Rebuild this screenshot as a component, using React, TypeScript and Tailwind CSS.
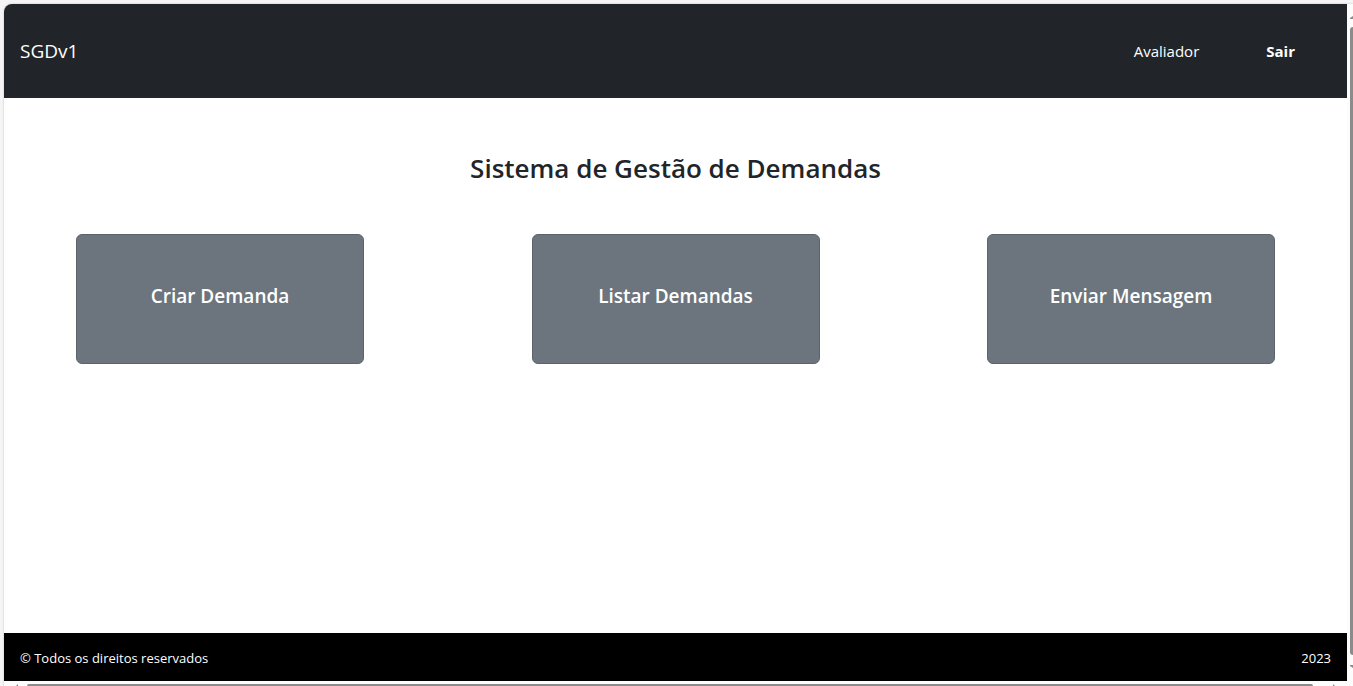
const actions = ["Criar Demanda", "Listar Demandas", "Enviar Mensagem"];

function Header() {
  return (
    <header className="flex h-[94px] shrink-0 items-center justify-between bg-[#212529] pr-[52px] pl-4 text-white">
      <a href="#inicio" className="text-[19px] leading-7">SGDv1</a>
      <nav className="flex items-center gap-[67px] text-[15px] leading-6">
        <a href="#perfil">Avaliador</a>
        <a href="#sair" className="font-bold">Sair</a>
      </nav>
    </header>
  );
}

function VerticalScrollbar() {
  return (
    <div aria-hidden="true" className="flex w-[6px] shrink-0 flex-col items-end overflow-hidden bg-[#fcfcfc] pt-3 pb-[13px]">
      <svg className="h-[3px] w-[3px] shrink-0" viewBox="0 0 3 3"><path d="M0 3V2L3 0V3Z" fill="#8b8b8b" /></svg>
      <div className="mt-2 mb-[10px] w-[3px] grow rounded-l-[3px] bg-[#8b8b8b]" />
      <svg className="h-[3px] w-[3px] shrink-0" viewBox="0 0 3 3"><path d="M0 0H3V3L0 1Z" fill="#8b8b8b" /></svg>
    </div>
  );
}

function HorizontalScrollbar() {
  return (
    <div aria-hidden="true" className="flex h-[5px] shrink-0 items-end overflow-hidden bg-[#fcfcfc] pr-[18px] pl-3">
      <svg className="h-[2px] w-[2px] shrink-0" viewBox="0 0 2 2"><path d="M2 0V2H0Z" fill="#8b8b8b" /></svg>
      <div className="mr-5 ml-[9px] h-[2px] grow rounded-t-[2px] bg-[#8b8b8b]" />
      <svg className="h-[2px] w-[2px] shrink-0" viewBox="0 0 2 2"><path d="M0 0V2H2Z" fill="#8b8b8b" /></svg>
    </div>
  );
}

export default function App() {
  return (
    <div className="h-screen overflow-hidden bg-[#f5f5f5] pt-1 pl-1 font-['Open_Sans','Noto_Sans',sans-serif]">
      <div className="flex h-full flex-col overflow-hidden rounded-tl-lg bg-white shadow-[0_0_2px_#00000040]">
        <div className="flex min-h-0 grow">
          <div className="flex min-w-0 grow flex-col">
            <Header />
            <main className="grow px-[72px] pt-12 text-center">
              <h1 className="text-[26px] leading-11 font-semibold text-[#212529]">Sistema de Gestão de Demandas</h1>
              <div className="mt-11 flex justify-between gap-4">
                {actions.map((label) => (
                  <button
                    key={label}
                    type="button"
                    className="h-[130px] w-72 rounded-md border border-[#5c636a] bg-[#6c757d] pb-[6px] text-[19px] leading-6 font-semibold text-white"
                  >
                    {label}
                  </button>
                ))}
              </div>
            </main>
            <footer className="flex h-12 shrink-0 items-center justify-between bg-black px-4 pt-px text-[13px] leading-5 text-white">
              <span>© Todos os direitos reservados</span>
              <span>2023</span>
            </footer>
          </div>
          <VerticalScrollbar />
        </div>
        <HorizontalScrollbar />
      </div>
    </div>
  );
}
